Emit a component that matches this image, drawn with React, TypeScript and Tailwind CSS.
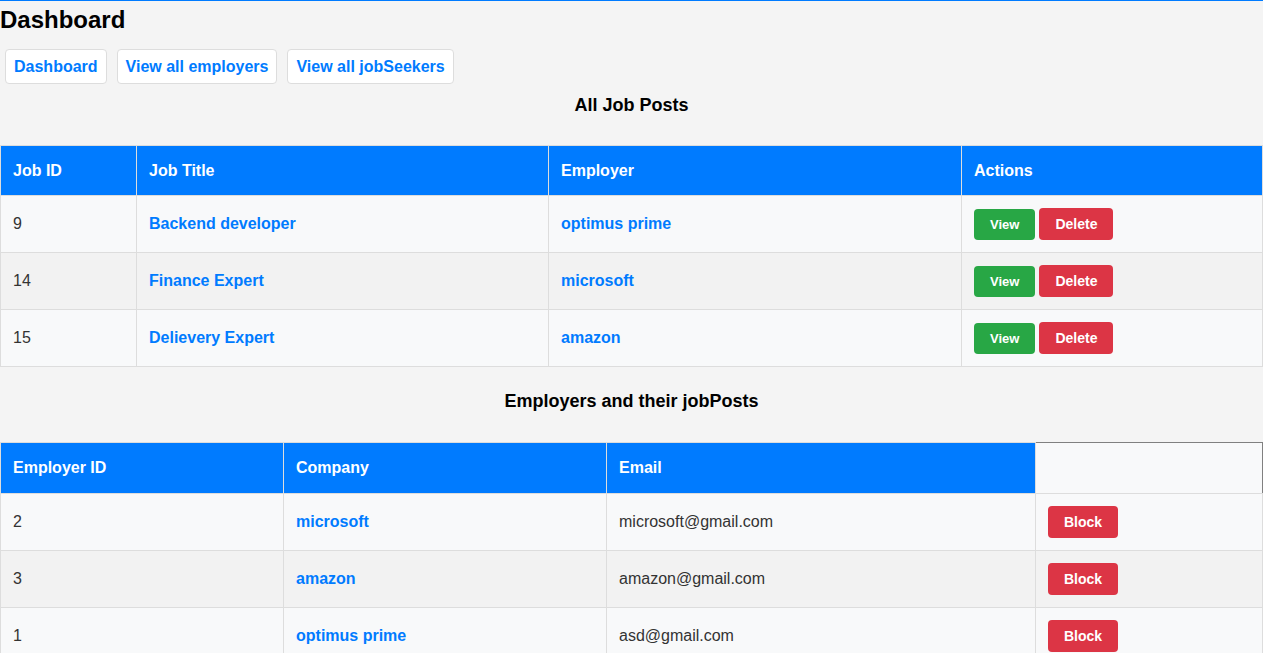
import React from 'react';

const jobs = [
  { id: 9, title: 'Backend developer', employer: 'optimus prime' },
  { id: 14, title: 'Finance Expert', employer: 'microsoft' },
  { id: 15, title: 'Delievery Expert', employer: 'amazon' },
];

const employers = [
  { id: 2, company: 'microsoft', email: 'microsoft@gmail.com' },
  { id: 3, company: 'amazon', email: 'amazon@gmail.com' },
  { id: 1, company: 'optimus prime', email: 'asd@gmail.com' },
];

const th = 'border border-[#ddd] bg-[#007bff] text-white font-bold text-left px-3 align-middle';
const td = 'border border-[#ddd] px-3 align-middle text-[#333]';
const link = 'text-[#007bff] font-bold';

const App: React.FC = () => {
  return (
    <div className="min-h-screen bg-[#f4f4f4] border-t border-[#007bff] text-[16px] text-black font-['Liberation_Sans',Arial,sans-serif]">
      <h1 className="mt-[5px] text-[24px] font-bold leading-[28px]">Dashboard</h1>

      <nav className="mt-[15px] flex gap-[10px] pl-[5px]">
        {['Dashboard', 'View all employers', 'View all jobSeekers'].map((label) => (
          <a
            key={label}
            href="#"
            className="h-[35px] px-2 flex items-center bg-white border border-[#ddd] rounded-[4px] text-[#007bff] font-bold"
          >
            {label}
          </a>
        ))}
      </nav>

      <h2 className="mt-[11px] text-center text-[18px] font-bold leading-[21px]">All Job Posts</h2>

      <table className="mt-[29px] w-full table-fixed border-collapse">
        <colgroup>
          <col className="w-[136px]" />
          <col className="w-[412px]" />
          <col className="w-[413px]" />
          <col />
        </colgroup>
        <thead>
          <tr className="h-[50px]">
            <th className={th}>Job ID</th>
            <th className={th}>Job Title</th>
            <th className={th}>Employer</th>
            <th className={th}>Actions</th>
          </tr>
        </thead>
        <tbody>
          {jobs.map((job, i) => (
            <tr key={job.id} className={`h-[57px] ${i % 2 === 1 ? 'bg-[#f2f2f2]' : 'bg-[#f8f9fa]'}`}>
              <td className={td}>{job.id}</td>
              <td className={td}>
                <a href="#" className={link}>{job.title}</a>
              </td>
              <td className={td}>
                <a href="#" className={link}>{job.employer}</a>
              </td>
              <td className={td}>
                <div className="flex items-center gap-1">
                  <button className="px-4 py-2 bg-[#28a745] text-white text-[13px] leading-[15px] font-bold rounded-[4px]">
                    View
                  </button>
                  <button className="px-4 py-2 bg-[#dc3545] text-white text-[14px] leading-[16px] font-bold rounded-[4px]">
                    Delete
                  </button>
                </div>
              </td>
            </tr>
          ))}
        </tbody>
      </table>

      <h2 className="mt-[24px] text-center text-[18px] font-bold leading-[21px]">Employers and their jobPosts</h2>

      <table className="mt-[30px] w-full table-fixed border-collapse">
        <colgroup>
          <col className="w-[283px]" />
          <col className="w-[323px]" />
          <col className="w-[429px]" />
          <col />
        </colgroup>
        <thead>
          <tr className="h-[51px]">
            <th className={th}>Employer ID</th>
            <th className={th}>Company</th>
            <th className={th}>Email</th>
            <th className="border border-[#ddd] border-t-[#808080] border-r-[#808080] bg-[#f8f9fa]"></th>
          </tr>
        </thead>
        <tbody>
          {employers.map((emp, i) => (
            <tr key={emp.id} className={`h-[57px] ${i % 2 === 1 ? 'bg-[#f2f2f2]' : 'bg-[#f8f9fa]'}`}>
              <td className={td}>{emp.id}</td>
              <td className={td}>
                <a href="#" className={link}>{emp.company}</a>
              </td>
              <td className={td}>{emp.email}</td>
              <td className={td}>
                <button className="px-4 py-2 bg-[#dc3545] text-white text-[14px] leading-[16px] font-bold rounded-[4px]">
                  Block
                </button>
              </td>
            </tr>
          ))}
        </tbody>
      </table>
    </div>
  );
};

export default App;
